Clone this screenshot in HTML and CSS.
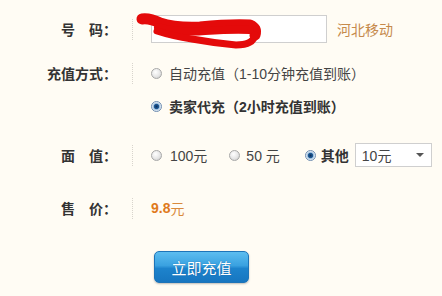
FILE: index.html
```html
<!DOCTYPE html>
<html lang="zh-CN">
<head>
<meta charset="utf-8">
<title>充值</title>
<link rel="stylesheet" href="styles.css">
</head>
<body>
<div class="form">
  <div class="row r1">
    <div class="label">号&emsp;码：</div>
    <div class="sep"></div>
    <div class="field">
      <div class="phone"></div>
      <span class="carrier">河北移动</span>
    </div>
  </div>
  <div class="row r2">
    <div class="label">充值方式：</div>
    <div class="sep"></div>
    <div class="field">
      <span class="radio"></span>
      <span class="opt">自动充值（1-10分钟充值到账）</span>
    </div>
  </div>
  <div class="row r3">
    <div class="label"></div>
    <div class="sep hidden"></div>
    <div class="field">
      <span class="radio on"></span>
      <span class="opt strong">卖家代充（2小时充值到账）</span>
    </div>
  </div>
  <div class="row r4">
    <div class="label">面&emsp;值：</div>
    <div class="sep"></div>
    <div class="field">
      <span class="radio"></span>
      <span class="opt v1">100元</span>
      <span class="radio"></span>
      <span class="opt v2">50 元</span>
      <span class="radio on"></span>
      <span class="opt strong v3">其他</span>
      <div class="select"><span>10元</span><i class="arrow"></i></div>
    </div>
  </div>
  <div class="row r5">
    <div class="label">售&emsp;价：</div>
    <div class="sep"></div>
    <div class="field price"><b>9.8</b>元</div>
  </div>
  <div class="btnrow">
    <button class="btn">立即充值</button>
  </div>
</div>
<svg class="scribble" width="442" height="60" viewBox="0 0 442 60">
  <path d="M142,19 Q150,18 160,23 Q175,28 200,27 Q230,24 250,25 Q257,28 255,35" fill="none" stroke="#e40a0a" stroke-width="11" stroke-linecap="round" stroke-linejoin="round"/>
  <path d="M158,27 Q180,33 205,31 Q235,29 250,30" fill="none" stroke="#e40a0a" stroke-width="8" stroke-linecap="round"/>
  <path d="M255,35 Q253,45 236,45 Q214,43 192,39 Q172,36 157,31" fill="none" stroke="#e40a0a" stroke-width="7" stroke-linecap="round" stroke-linejoin="round"/>
</svg>
</body>
</html>
```

FILE: styles.css
```css
html, body {
  margin: 0;
  padding: 0;
  background: #fffcf4;
}
body {
  width: 442px;
  height: 296px;
  overflow: hidden;
  position: relative;
  font-family: "Liberation Sans", "Noto Sans CJK SC", sans-serif;
  font-size: 14px;
  color: #444;
}
.form {
  padding-top: 15px;
}
.row {
  display: flex;
  align-items: center;
}
.r1 { height: 28px; }
.r2 { height: 32px; margin-top: 14px; }
.r3 { height: 32px; margin-top: 1px; }
.r4 { height: 30px; margin-top: 18px; }
.r5 { height: 30px; margin-top: 23px; }
.label {
  width: 117px;
  text-align: right;
  font-weight: bold;
  color: #333;
  font-family: "Noto Sans CJK SC", sans-serif;
  white-space: nowrap;
}
.sep {
  margin-left: 15px;
  width: 0;
  height: 21px;
  border-left: 1px dotted #d8d4cc;
}
.sep.hidden { visibility: hidden; }
.field {
  margin-left: 18px;
  display: flex;
  align-items: center;
  white-space: nowrap;
}
.phone {
  width: 174px;
  height: 26px;
  border: 1px solid #cfcfcf;
  background: #fff;
}
.carrier {
  margin-left: 10px;
  color: #c68a4c;
  font-family: "Noto Sans CJK SC", sans-serif;
}
.radio {
  width: 9px;
  height: 9px;
  border-radius: 50%;
  border: 1px solid #a8a8a8;
  background: radial-gradient(circle at 40% 35%, #ffffff 0%, #e6e6e6 55%, #c4c4c4 100%);
  flex: none;
}
.radio.on {
  border-color: #6f8db0;
  background: radial-gradient(circle at 50% 50%, #0d2f5c 0%, #1f5a95 35%, #9fc0de 48%, #e8f0f8 70%, #c9d7e6 100%);
}
.opt {
  margin-left: 7px;
  color: #444;
}
.strong {
  font-weight: bold;
  color: #333;
}
.v1 { margin-right: 22px; margin-left: 8px; }
.v2 { margin-right: 25px; margin-left: 6px; }
.v3 { margin-left: 5px; }
.select {
  margin-left: 6px;
  border: 1px solid #cfcfcf;
  background: #fff;
  display: flex;
  align-items: center;
  justify-content: space-between;
  padding: 0 7px 0 6px;
  box-sizing: border-box;
  width: 77px;
  height: 24px;
  color: #444;
}
.arrow {
  width: 0;
  height: 0;
  border-left: 4px solid transparent;
  border-right: 4px solid transparent;
  border-top: 4px solid #555;
}
.price {
  color: #d98a3c;
  font-family: "Noto Sans CJK SC", sans-serif;
}
.price b {
  font-family: "Liberation Sans", sans-serif;
  color: #e07a1c;
}
.btnrow {
  margin-top: 28px;
  padding-left: 154px;
}
.btn {
  width: 95px;
  height: 32px;
  border: 1px solid #1d74b8;
  border-radius: 5px;
  background: linear-gradient(#5cbdf0 0%, #3aa1e0 45%, #1d83cc 55%, #1776c0 100%);
  color: #fff;
  font-family: "Noto Sans CJK SC", sans-serif;
  font-size: 15px;
  padding: 0;
  text-shadow: 0 0 1px #0d5c9a;
  box-shadow: 0 1px 2px rgba(0,0,0,0.25);
}
.scribble {
  position: absolute;
  left: 0;
  top: 0;
}
```
